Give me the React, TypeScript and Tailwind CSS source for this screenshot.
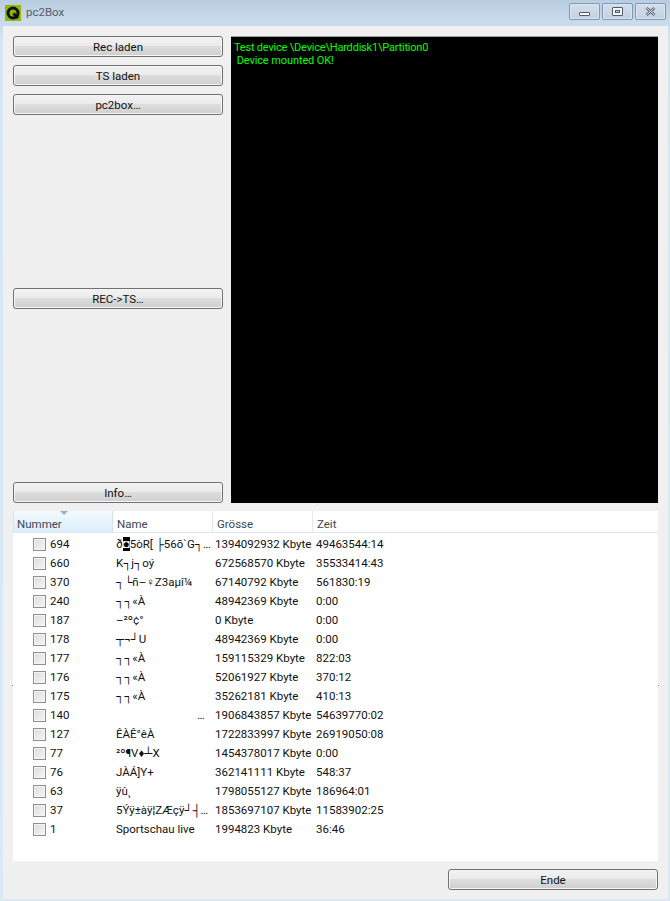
const FONT = "font-['Roboto','Noto_Sans',sans-serif]";

function Btn({ label, className = "" }: { label: string; className?: string }) {
  return (
    <button className={`relative h-[21px] w-[210px] shrink-0 rounded-[3px] border border-[#707070] bg-[linear-gradient(#f2f2f2_0%,#ebebeb_45%,#dddddd_50%,#cfcfcf_100%)] pt-[2px] shadow-[inset_0_0_0_1px_#f6f6f6] text-[11.5px] leading-[17px] text-[#111] ${className}`}>
      {label}
    </button>
  );
}

function WinBtn({ children }: { children: React.ReactNode }) {
  return (
    <div className="flex h-[17px] w-[31px] items-center justify-center rounded-[2px] border border-[#8496b2] bg-[linear-gradient(#d2deec,#c3d2e3)] shadow-[inset_0_0_0_1px_#dbe5f0]">
      {children}
    </div>
  );
}

const rows: [string, React.ReactNode, string, string][] = [
  ["694", <>ð<span className="bg-black text-white">◘</span>5òR[ ├56õ`G┐…</>, "1394092932 Kbyte", "49463544:14"],
  ["660", "K┐j┐oý", "672568570 Kbyte", "35533414:43"],
  ["370", "┐└ñ–♀Z3aµî¼", "67140792 Kbyte", "561830:19"],
  ["240", "┐┐«À", "48942369 Kbyte", "0:00"],
  ["187", "–²º¢°", "0 Kbyte", "0:00"],
  ["178", "┬¬┘U", "48942369 Kbyte", "0:00"],
  ["177", "┐┐«À", "159115329 Kbyte", "822:03"],
  ["176", "┐┐«À", "52061927 Kbyte", "370:12"],
  ["175", "┐┐«À", "35262181 Kbyte", "410:13"],
  ["140", <span className="block pl-[81px]">…</span>, "1906843857 Kbyte", "54639770:02"],
  ["127", "ÊÀÊ°êÀ", "1722833997 Kbyte", "26919050:08"],
  ["77", "²º¶V♦┴X", "1454378017 Kbyte", "0:00"],
  ["76", "JÀÁ]Y+", "362141111 Kbyte", "548:37"],
  ["63", "ÿû¸", "1798055127 Kbyte", "186964:01"],
  ["37", "5Ýÿ±àÿ¦ZÆçÿ┘┤…", "1853697107 Kbyte", "11583902:25"],
  ["1", "Sportschau live", "1994823 Kbyte", "36:46"],
];

export default function App() {
  return (
    <div className={`flex h-[901px] w-[670px] flex-col overflow-hidden bg-[linear-gradient(#b9cde0,#d6e5f4_40px,#dbe9f7)] ${FONT}`}>
      <div className="flex h-[26px] shrink-0 items-center pl-[5px] pr-[4px]">
        <svg width="16" height="16" viewBox="0 0 16 16" className="shrink-0">
          <rect width="16" height="16" fill="#8fb800" />
          <circle cx="8" cy="8" r="5" fill="none" stroke="#111" strokeWidth="3" />
          <path d="M8 8 L13 13" stroke="#111" strokeWidth="3" />
          <circle cx="8" cy="8" r="1" fill="#8fb800" />
        </svg>
        <span className="ml-[5px] text-[11.5px] text-[#555c66]">pc2Box</span>
        <div className="ml-auto flex gap-[2px] pb-[3px]">
          <WinBtn>
            <div className="mt-[5px] h-[4px] w-[11px] rounded-[1px] border border-[#555b66] bg-white" />
          </WinBtn>
          <WinBtn>
            <div className="flex h-[9px] w-[11px] items-center justify-center rounded-[1px] border border-[#555b66] bg-[#f2f5f9]">
              <div className="h-[3px] w-[5px] border border-[#555b66] bg-[#c9d6e5]" />
            </div>
          </WinBtn>
          <WinBtn>
            <svg width="11" height="9" viewBox="0 0 11 9">
              <path d="M1.5 1 L9.5 8 M9.5 1 L1.5 8" stroke="#555b66" strokeWidth="2.6" />
              <path d="M1.5 1 L9.5 8 M9.5 1 L1.5 8" stroke="#f4f6f9" strokeWidth="1" />
            </svg>
          </WinBtn>
        </div>
      </div>
      <div className="ml-[3px] mr-[2px] mb-[2px] flex min-h-0 flex-1 flex-col bg-[#f0f0f0] pl-[10px] pr-[10px] pt-[10px]">
        <div className="flex h-[467px] shrink-0 gap-[8px]">
          <div className="flex w-[210px] shrink-0 flex-col">
            <Btn label="Rec laden" />
            <Btn label="TS laden" className="mt-[8px]" />
            <Btn label="pc2box…" className="mt-[8px]" />
            <Btn label="REC->TS…" className="mt-[173px]" />
            <Btn label="Info…" className="mt-auto" />
          </div>
          <div className="flex-1 border-t border-[#a0a0a0] bg-black pl-[3px] pt-[4px] text-[11px] leading-[13px] text-[#00ff00]">
            <div className="tracking-[-0.2px]">Test device \Device\Harddisk1\Partition0</div>
            <div className="tracking-[-0.1px]">&nbsp;Device mounted OK!</div>
          </div>
        </div>
        <div className="relative mt-[8px] flex h-[350px] shrink-0 flex-col bg-white text-[11.5px] text-[#111]">
          <div className="absolute left-[-1px] top-[174px] h-[1px] w-[1px] bg-[#888]" />
          <div className="absolute right-[-1px] top-[174px] h-[1px] w-[1px] bg-[#888]" />
          <div className="flex h-[22px] shrink-0 border-b border-[#dfe6ee] text-[#3c4654]">
            <div className="relative w-[100px] border-x border-[#cfe6f7] bg-[linear-gradient(#f4fafe,#d9eefb)] pl-[3px] pt-[5px] leading-[16px]">
              Nummer
              <div className="absolute left-[46px] top-0 h-0 w-0 border-x-[4px] border-t-[4px] border-x-transparent border-t-[#86b6dc]" />
            </div>
            <div className="w-[100px] border-r border-[#e8e8e8] pl-[4px] pt-[5px] leading-[16px]">Name</div>
            <div className="w-[100px] border-r border-[#e8e8e8] pl-[4px] pt-[5px] leading-[16px]">Grösse</div>
            <div className="flex-1 pl-[4px] pt-[5px] leading-[16px]">Zeit</div>
          </div>
          <div className="pt-[2px]">
            {rows.map(([num, name, size, time]) => (
              <div key={num} className="flex h-[19px] items-center whitespace-nowrap">
                <div className="flex w-[100px] items-center pl-[20px]">
                  <div className="h-[13px] w-[13px] shrink-0 border border-[#8e8f8f] bg-[linear-gradient(135deg,#dcdcdc,#f6f6f6)] shadow-[inset_0_0_0_1px_#f4f4f4]" />
                  <span className="ml-[4px]">{num}</span>
                </div>
                <div className="w-[100px] overflow-hidden pl-[3px]">{name}</div>
                <div className="w-[100px] pl-[2px]">{size}</div>
                <div className="flex-1 pl-[3px]">{time}</div>
              </div>
            ))}
          </div>
        </div>
        <div className="mt-[8px] flex justify-end">
          <Btn label="Ende" />
        </div>
      </div>
    </div>
  );
}
